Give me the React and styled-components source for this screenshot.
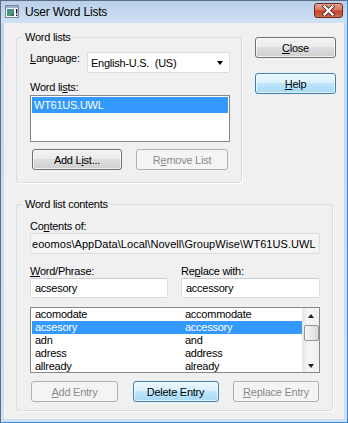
import React from "react";
import styled, { createGlobalStyle } from "styled-components";

const GlobalStyle = createGlobalStyle`
  body {
    margin: 0;
    font-family: "Liberation Sans", Arial, sans-serif;
    font-size: 11px;
    letter-spacing: -0.25px;
    color: #000;
  }
  * { box-sizing: border-box; }
`;

const Window = styled.div`
  width: 348px;
  height: 423px;
  display: flex;
  flex-direction: column;
  background: linear-gradient(#c2d6ee, #cfe0f4);
  border: 1px solid #5d6d82;
  border-right-color: #2f8fe6;
  border-bottom-color: #2f8fe6;
  padding: 0 3px 3px 3px;
`;

const TitleBar = styled.div`
  height: 22px;
  flex: none;
  display: flex;
  align-items: center;
  margin: 0 -3px;
  padding: 0 4px 0 4px;
  background: linear-gradient(#b9d0ea, #c7daf0 60%, #d2e2f4);
`;

const Title = styled.div`
  margin-left: 6px;
  font-size: 12px;
  letter-spacing: -0.2px;
  color: #000;
  flex: 1;
`;

const CloseButton = styled.div`
  width: 29px;
  height: 15px;
  border: 1px solid #6b2c24;
  border-radius: 3px;
  background: linear-gradient(#e8a292, #d9775f 45%, #c4412a 55%, #d06a4f);
  display: flex;
  align-items: center;
  justify-content: center;
  margin-top: -3px;
`;

const Client = styled.div`
  flex: 1;
  background: #f0f0f0;
  display: flex;
  flex-direction: column;
`;

const TopRow = styled.div`
  display: flex;
  gap: 13px;
  padding: 14px 0 0 12px;
`;

const Group = styled.div`
  position: relative;
  width: ${(p) => p.$width}px;
  border: 1px solid #d5dfe5;
  border-radius: 3px;
  box-shadow: 1px 1px 0 #fff;
  padding: ${(p) => p.$pad};
  display: flex;
  flex-direction: column;
  margin-top: ${(p) => p.$top || 0}px;
  margin-left: ${(p) => p.$left || 0}px;
`;

const Legend = styled.span`
  position: absolute;
  top: -7px;
  left: 6px;
  padding: 0 2px;
  line-height: 13px;
  background: #f0f0f0;
`;

const Label = styled.div`
  line-height: 13px;
  white-space: nowrap;
  width: ${(p) => (p.$width ? `${p.$width}px` : "auto")};
  flex: none;
  margin-top: ${(p) => p.$gap || 0}px;
`;

const InlineRow = styled.div`
  display: flex;
  align-items: flex-start;
`;

const ComboBox = styled.div`
  width: 143px;
  height: 21px;
  background: #fff;
  border: 1px solid #d9dee3;
  border-radius: 2px;
  display: flex;
  align-items: center;
  padding: 0 6px 0 3px;
  white-space: pre;
`;

const ComboText = styled.span`
  flex: 1;
`;

const DownArrow = styled.span`
  width: 0;
  height: 0;
  border-left: 3.5px solid transparent;
  border-right: 3.5px solid transparent;
  border-top: 4px solid #000;
`;

const ListBox = styled.div`
  margin-top: 1px;
  height: 47px;
  background: #fff;
  border: 1px solid #828790;
  padding: 1px;
`;

const ListItem = styled.div`
  height: 16px;
  line-height: 16px;
  padding-left: 2px;
  background: ${(p) => (p.$selected ? "#3399ff" : "transparent")};
  color: ${(p) => (p.$selected ? "#fff" : "#000")};
`;

const ButtonRow = styled.div`
  display: flex;
  justify-content: space-between;
  padding: 0 ${(p) => p.$inset}px;
  margin-top: ${(p) => p.$gap}px;
`;

const Button = styled.div`
  width: ${(p) => p.$width}px;
  height: 21px;
  flex: none;
  border-radius: 3px;
  display: flex;
  align-items: center;
  justify-content: center;
  white-space: nowrap;
  border: 1px solid
    ${(p) =>
      p.$variant === "disabled"
        ? "#adb2b5"
        : p.$variant === "default"
        ? "#3c7fb1"
        : "#707070"};
  color: ${(p) => (p.$variant === "disabled" ? "#8b8b8b" : "#000")};
  background: ${(p) =>
    p.$variant === "disabled"
      ? "#f4f4f4"
      : p.$variant === "default"
      ? "linear-gradient(#eaf6fd, #d9f0fc 50%, #bee6fd 50%, #a7d9f5)"
      : "linear-gradient(#f2f2f2, #ebebeb 50%, #dddddd 50%, #cfcfcf)"};
  box-shadow: inset 0 0 0 1px
    ${(p) => (p.$variant === "disabled" ? "#f4f4f4" : "rgba(255,255,255,0.7)")};
`;

const ButtonColumn = styled.div`
  display: flex;
  flex-direction: column;
  gap: 15px;
`;

const ReadOnlyField = styled.div`
  height: 21px;
  background: #f4f4f4;
  border: 1px solid #d9dee3;
  border-radius: 2px;
  display: flex;
  align-items: center;
  overflow: hidden;
  white-space: nowrap;
  letter-spacing: 0.05px;
  padding: 0 1px;
`;

const PairRow = styled.div`
  display: flex;
  gap: 13px;
  margin-top: ${(p) => p.$gap || 0}px;
`;

const PairColumn = styled.div`
  width: ${(p) => p.$width}px;
  display: flex;
  flex-direction: column;
`;

const TextInput = styled.div`
  height: 20px;
  background: #fff;
  border: 1px solid #d9dee3;
  border-top-color: #c8cdd2;
  border-radius: 2px;
  display: flex;
  align-items: center;
  padding: 0 4px;
`;

const ListView = styled.div`
  margin-top: 9px;
  height: 66px;
  background: #fff;
  border: 1px solid #828790;
  display: flex;
  overflow: hidden;
`;

const Rows = styled.div`
  flex: 1;
  padding: 0 0 0 1px;
  overflow: hidden;
`;

const Row = styled.div`
  height: 13px;
  line-height: 13px;
  display: grid;
  grid-template-columns: 150px 1fr;
  padding-left: 3px;
  background: ${(p) => (p.$selected ? "#3399ff" : "transparent")};
  color: ${(p) => (p.$selected ? "#fff" : "#000")};
`;

const ScrollBar = styled.div`
  width: 17px;
  flex: none;
  background: linear-gradient(to right, #e6e6e6, #f5f5f5 30%, #f0f0f0);
  border-left: 1px solid #e8e8e8;
  display: flex;
  flex-direction: column;
  align-items: center;
  padding: 6px 0 4px;
`;

const ScrollArrow = styled.span`
  width: 0;
  height: 0;
  border-left: 3.5px solid transparent;
  border-right: 3.5px solid transparent;
  border-${(p) => (p.$up ? "bottom" : "top")}: 4px solid #222;
`;

const Thumb = styled.div`
  width: 15px;
  height: 16px;
  margin-top: 7px;
  border: 1px solid #979797;
  border-radius: 2px;
  background: linear-gradient(to right, #f6f6f6, #e9e9e9 50%, #d8d8d8);
`;

const Spacer = styled.div`
  flex: 1;
`;

const AppIcon = () => (
  <svg width="14" height="14" viewBox="0 0 14 14">
    <defs>
      <linearGradient id="ig" x1="0" y1="0" x2="1" y2="1">
        <stop offset="0" stopColor="#3a8fb8" />
        <stop offset="0.6" stopColor="#4c9a6a" />
        <stop offset="1" stopColor="#2e5a70" />
      </linearGradient>
    </defs>
    <rect x="0.5" y="0.5" width="13" height="12" fill="#f4f6f8" stroke="#7b8797" />
    <rect x="1" y="1" width="12" height="2" fill="#9fb4cc" />
    <rect x="2" y="4" width="7" height="7" fill="url(#ig)" />
    <rect x="11" y="4" width="1.4" height="4.5" fill="#1a1a1a" />
    <rect x="11" y="9.5" width="1.4" height="1.5" fill="#1a1a1a" />
  </svg>
);

const CloseGlyph = () => (
  <svg width="13" height="11" viewBox="0 0 13 11">
    <path d="M2.5 1.5 L10.5 9.5 M10.5 1.5 L2.5 9.5" stroke="#5a2b25" strokeWidth="4" strokeLinecap="square" />
    <path d="M2.5 1.5 L10.5 9.5 M10.5 1.5 L2.5 9.5" stroke="#ffffff" strokeWidth="2.2" strokeLinecap="square" />
  </svg>
);

const entries = [
  ["acomodate", "accommodate"],
  ["acsesory", "accessory"],
  ["adn", "and"],
  ["adress", "address"],
  ["allready", "already"],
];

export default function App() {
  return (
    <>
      <GlobalStyle />
      <Window>
        <TitleBar>
          <AppIcon />
          <Title>User Word Lists</Title>
          <CloseButton>
            <CloseGlyph />
          </CloseButton>
        </TitleBar>
        <Client>
          <TopRow>
            <Group $width={226} $pad="14px 11px 12px 13px">
              <Legend>Word lists</Legend>
              <InlineRow>
                <Label $width={57}>
                  <u>L</u>anguage:
                </Label>
                <ComboBox>
                  <ComboText>English-U.S.  (US)</ComboText>
                  <DownArrow />
                </ComboBox>
              </InlineRow>
              <Label $gap={8}>
                Word li<u>s</u>ts:
              </Label>
              <ListBox>
                <ListItem $selected>WT61US.UWL</ListItem>
              </ListBox>
              <ButtonRow $inset={2} $gap={7}>
                <Button $width={90}>
                  Add L<u>i</u>st...
                </Button>
                <Button $width={92} $variant="disabled">
                  R<u>e</u>move List
                </Button>
              </ButtonRow>
            </Group>
            <ButtonColumn>
              <Button $width={81}>
                <u>C</u>lose
              </Button>
              <Button $width={81} $variant="default">
                <u>H</u>elp
              </Button>
            </ButtonColumn>
          </TopRow>
          <Group $width={317} $top={21} $left={12} $pad="15px 12px 8px 13px">
            <Legend>Word list contents</Legend>
            <Label>
              Co<u>n</u>tents of:
            </Label>
            <ReadOnlyField>eoomos\AppData\Local\Novell\GroupWise\WT61US.UWL</ReadOnlyField>
            <PairRow $gap={11}>
              <PairColumn $width={138}>
                <Label>
                  <u>W</u>ord/Phrase:
                </Label>
                <TextInput>acsesory</TextInput>
              </PairColumn>
              <PairColumn $width={139}>
                <Label>
                  Re<u>p</u>lace with:
                </Label>
                <TextInput>accessory</TextInput>
              </PairColumn>
            </PairRow>
            <ListView>
              <Rows>
                {entries.map(([word, repl], i) => (
                  <Row key={word} $selected={i === 1}>
                    <span>{word}</span>
                    <span>{repl}</span>
                  </Row>
                ))}
              </Rows>
              <ScrollBar>
                <ScrollArrow $up />
                <Thumb />
                <Spacer />
                <ScrollArrow />
              </ScrollBar>
            </ListView>
            <ButtonRow $inset={1} $gap={8}>
              <Button $width={87} $variant="disabled">
                <u>A</u>dd Entry
              </Button>
              <Button $width={86} $variant="default">
                Delete Entry
              </Button>
              <Button $width={86} $variant="disabled">
                <u>R</u>eplace Entry
              </Button>
            </ButtonRow>
          </Group>
        </Client>
      </Window>
    </>
  );
}
